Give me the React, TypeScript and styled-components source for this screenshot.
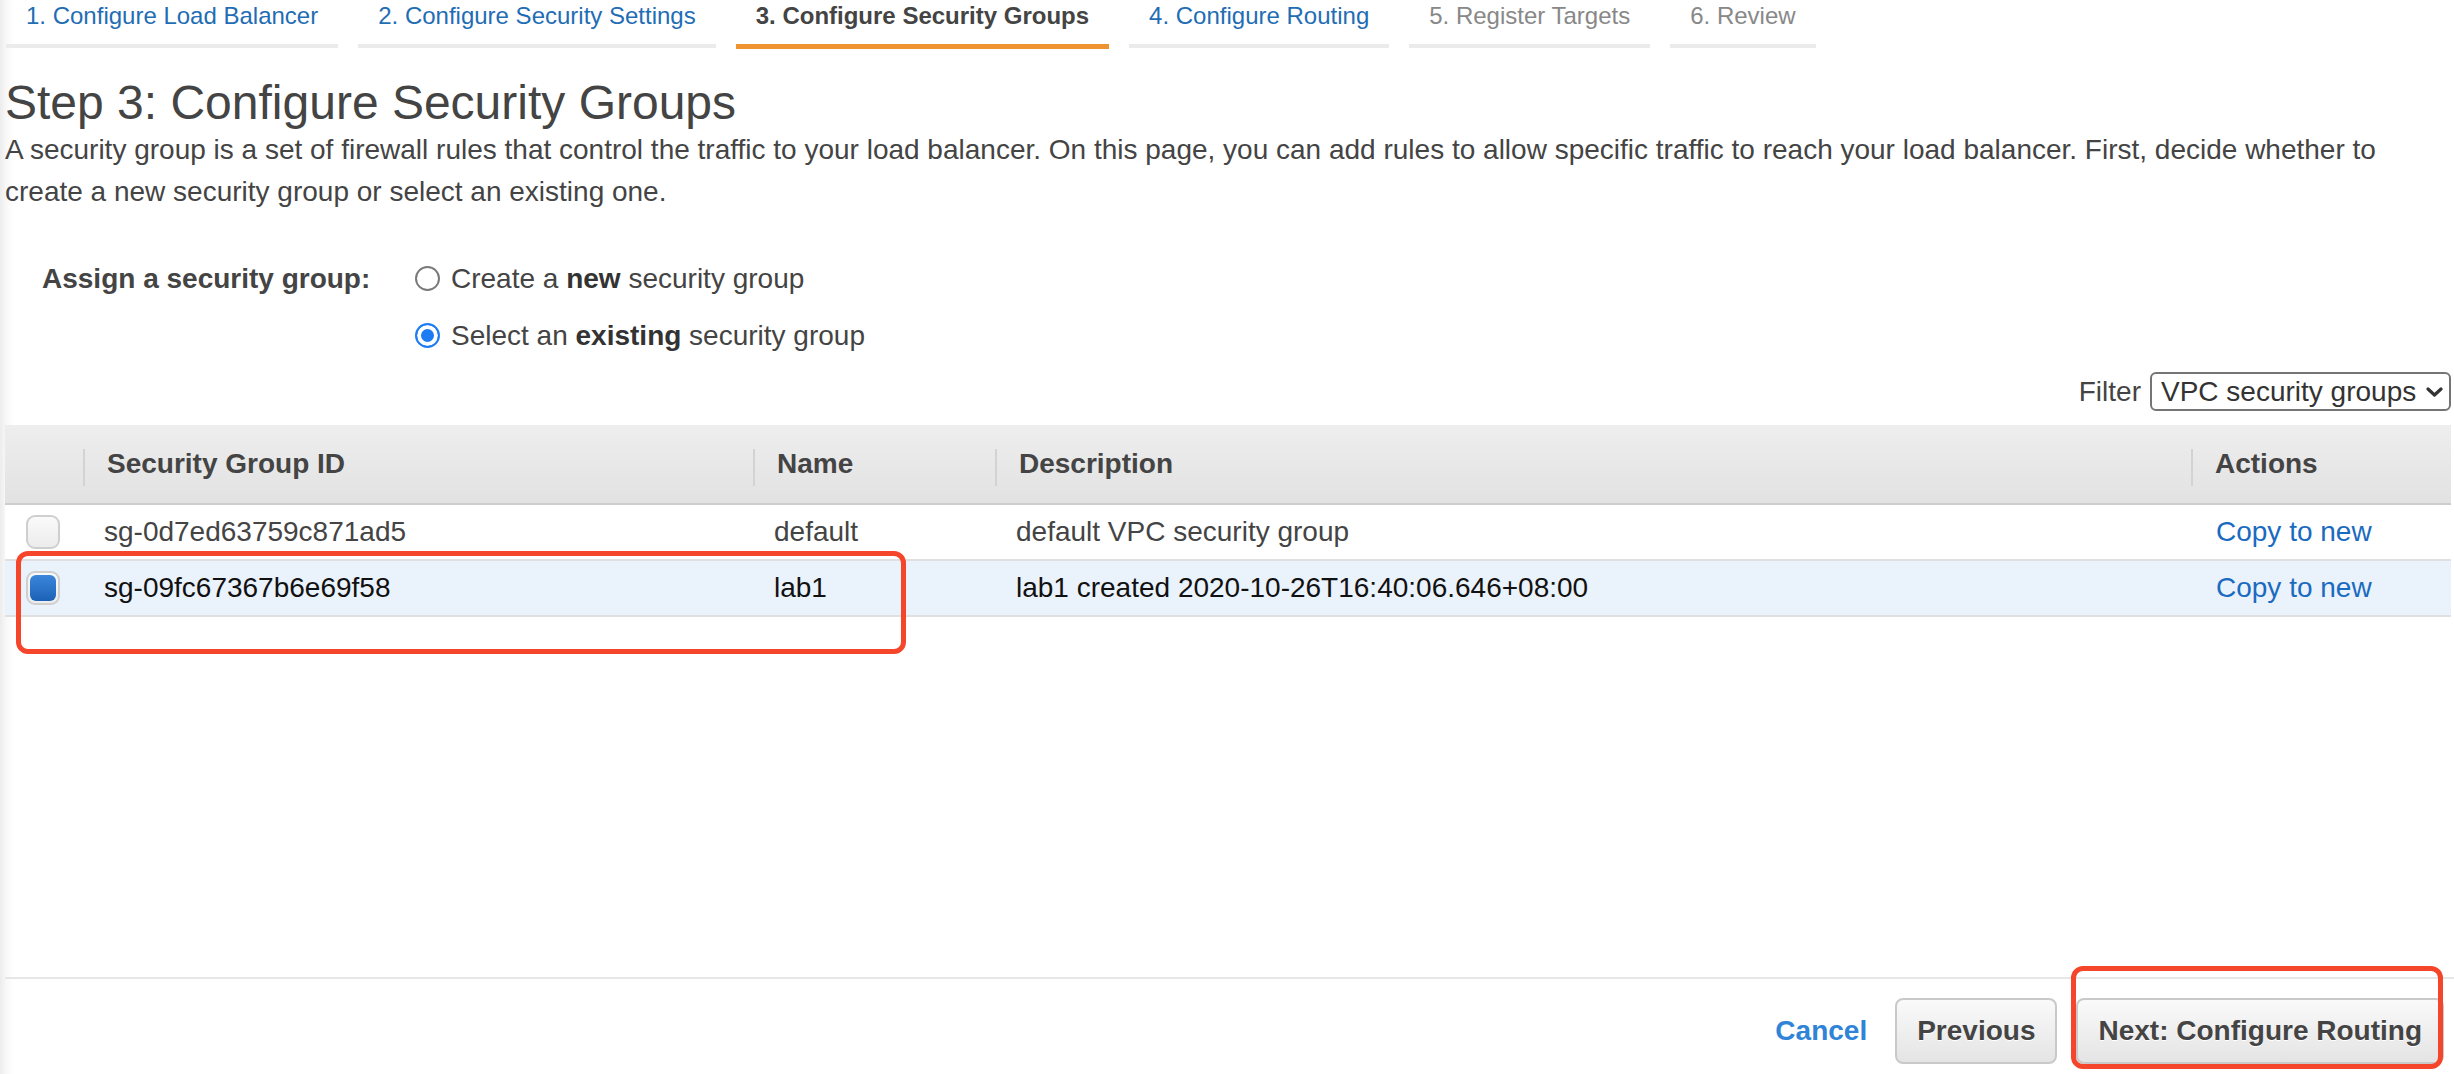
import React from "react";
import styled, { createGlobalStyle } from "styled-components";

const Global = createGlobalStyle`
  html, body { margin: 0; padding: 0; }
  body {
    background: linear-gradient(to right, #ececec 0px, #f8f8f8 6px, #ffffff 14px);
    font-family: "Liberation Sans", Arial, Helvetica, sans-serif;
    color: #444;
  }
`;

const Page = styled.div`
  position: relative;
  width: 2454px;
  height: 1074px;
  overflow: hidden;
  display: flex;
  flex-direction: column;
`;

const TabBar = styled.div`
  display: flex;
  align-items: flex-end;
  gap: 20px;
  padding-left: 6px;
`;

const Tab = styled.div<{ $state: "link" | "active" | "disabled" }>`
  padding: 0 20px 12px;
  font-size: 24px;
  line-height: 32px;
  white-space: nowrap;
  font-weight: ${(p) => (p.$state === "active" ? 700 : 400)};
  color: ${(p) =>
    p.$state === "active" ? "#444" : p.$state === "link" ? "#1f6db4" : "#888"};
  border-bottom: ${(p) =>
    p.$state === "active" ? "5px solid #ee9330" : "4px solid #ebebeb"};
  margin-bottom: ${(p) => (p.$state === "active" ? "0" : "1px")};
`;

const Content = styled.div`
  padding: 0 3px 0 5px;
  display: flex;
  flex-direction: column;
`;

const Heading = styled.h1`
  margin: 28px 0 0;
  font-size: 48px;
  line-height: 52px;
  font-weight: 400;
  color: #444;
`;

const Intro = styled.p`
  margin: 0;
  font-size: 28px;
  line-height: 42px;
  color: #444;
`;

const AssignGrid = styled.div`
  margin-top: 37px;
  display: grid;
  grid-template-columns: 373px 1fr;
  padding-left: 37px;
`;

const AssignLabel = styled.div`
  font-size: 28px;
  font-weight: 700;
  line-height: 57px;
  color: #444;
`;

const RadioList = styled.div`
  display: flex;
  flex-direction: column;
`;

const RadioRow = styled.label`
  display: flex;
  align-items: center;
  gap: 11px;
  height: 57px;
  font-size: 28px;
  color: #444;
  b { color: #333; }
`;

const RadioDot = styled.span<{ $checked?: boolean }>`
  box-sizing: border-box;
  width: 25px;
  height: 25px;
  border-radius: 50%;
  flex: none;
  border: ${(p) => (p.$checked ? "2px solid #1d7cf2" : "2px solid #7a7a7a")};
  background: ${(p) => (p.$checked ? "#1d7cf2" : "#fff")};
  box-shadow: ${(p) => (p.$checked ? "inset 0 0 0 4px #fff" : "none")};
`;

const FilterRow = styled.div`
  margin-top: 8px;
  display: flex;
  justify-content: flex-end;
  align-items: center;
  gap: 9px;
  font-size: 28px;
  color: #444;
`;

const SelectBox = styled.div`
  box-sizing: border-box;
  width: 301px;
  height: 39px;
  border: 2px solid #757575;
  border-radius: 6px;
  display: flex;
  align-items: center;
  justify-content: space-between;
  padding: 0 6px 0 9px;
  font-size: 28px;
  color: #333;
  background: #fff;
`;

const TableWrap = styled.div`
  margin-top: 14px;
  height: 552px;
  display: flex;
  flex-direction: column;
`;

const cols = "78px 670px 242px 1196px 1fr";

const HeaderRow = styled.div`
  display: grid;
  grid-template-columns: ${cols};
  height: 78px;
  background: linear-gradient(#eeeeee, #e2e2e2);
  border-bottom: 2px solid #cdcdcd;
`;

const HeadCell = styled.div<{ $sep?: boolean }>`
  display: flex;
  align-items: center;
  padding-left: 22px;
  font-size: 28px;
  font-weight: 700;
  color: #444;
  border-left: ${(p) => (p.$sep ? "2px solid #d3d3d3" : "none")};
  border-image: ${(p) =>
    p.$sep
      ? "linear-gradient(transparent 24px, #d3d3d3 24px, #d3d3d3 60px, transparent 60px) 1"
      : "none"};
`;

const Row = styled.div<{ $selected?: boolean }>`
  display: grid;
  grid-template-columns: ${cols};
  height: 54px;
  border-bottom: 2px solid #e0e0e0;
  background: ${(p) => (p.$selected ? "#eaf2fc" : "#fff")};
  color: ${(p) => (p.$selected ? "#111" : "#444")};
`;

const Cell = styled.div<{ $pad?: number }>`
  display: flex;
  align-items: center;
  padding-left: ${(p) => p.$pad ?? 21}px;
  font-size: 28px;
  white-space: nowrap;
`;

const CheckCell = styled.div`
  display: flex;
  align-items: center;
  padding-left: 21px;
`;

const Check = styled.span<{ $checked?: boolean }>`
  box-sizing: border-box;
  width: 34px;
  height: 34px;
  border-radius: 9px;
  border: 2px solid #cfcfcf;
  background: linear-gradient(#fafafa, #ececec);
  display: flex;
  align-items: center;
  justify-content: center;
  &::after {
    content: "";
    display: ${(p) => (p.$checked ? "block" : "none")};
    width: 26px;
    height: 26px;
    border-radius: 6px;
    background: linear-gradient(#3b87dc, #1b62b6);
  }
`;

const Link = styled.a`
  color: #1a6bc0;
  text-decoration: none;
  font-size: 28px;
`;

const Footer = styled.div`
  border-top: 2px solid #e6e6e6;
  padding: 19px 10px 0 0;
  display: flex;
  justify-content: flex-end;
  align-items: center;
  margin-right: -3px;
`;

const CancelLink = styled.a`
  font-size: 28px;
  font-weight: 700;
  color: #2f84d8;
  margin-right: 28px;
`;

const Button = styled.button`
  box-sizing: border-box;
  height: 66px;
  padding: 0 20px;
  margin-left: 19px;
  border: 2px solid #c9c9c9;
  border-radius: 8px;
  background: linear-gradient(#fafafa, #e4e4e4);
  font-family: "Liberation Sans", Arial, sans-serif;
  font-size: 28px;
  font-weight: 700;
  color: #444;
  text-shadow: 0 1px 0 #fff;
  &:first-of-type { margin-left: 0; }
`;

const Annotation = styled.div<{ $x: number; $y: number; $w: number; $h: number }>`
  position: absolute;
  left: ${(p) => p.$x}px;
  top: ${(p) => p.$y}px;
  width: ${(p) => p.$w}px;
  height: ${(p) => p.$h}px;
  box-sizing: border-box;
  border: 5px solid #f5452b;
  border-radius: 12px;
  pointer-events: none;
`;

const Chevron = () => (
  <svg width="17" height="12" viewBox="0 0 17 12">
    <path d="M2 3 L8.5 9 L15 3" fill="none" stroke="#333" strokeWidth="3.2" strokeLinecap="round" strokeLinejoin="round" />
  </svg>
);

const tabs: { label: string; state: "link" | "active" | "disabled" }[] = [
  { label: "1. Configure Load Balancer", state: "link" },
  { label: "2. Configure Security Settings", state: "link" },
  { label: "3. Configure Security Groups", state: "active" },
  { label: "4. Configure Routing", state: "link" },
  { label: "5. Register Targets", state: "disabled" },
  { label: "6. Review", state: "disabled" },
];

const groups = [
  { id: "sg-0d7ed63759c871ad5", name: "default", desc: "default VPC security group", selected: false },
  { id: "sg-09fc67367b6e69f58", name: "lab1", desc: "lab1 created 2020-10-26T16:40:06.646+08:00", selected: true },
];

export default function App() {
  return (
    <Page>
      <Global />
      <TabBar>
        {tabs.map((t) => (
          <Tab key={t.label} $state={t.state}>
            {t.label}
          </Tab>
        ))}
      </TabBar>
      <Content>
        <Heading>Step 3: Configure Security Groups</Heading>
        <Intro>
          A security group is a set of firewall rules that control the traffic to your load balancer. On this page, you can add rules to allow specific traffic to reach your load balancer. First, decide whether to create a new security group or select an existing one.
        </Intro>
        <AssignGrid>
          <AssignLabel>Assign a security group:</AssignLabel>
          <RadioList>
            <RadioRow>
              <RadioDot />
              <span>
                Create a <b>new</b> security group
              </span>
            </RadioRow>
            <RadioRow>
              <RadioDot $checked />
              <span>
                Select an <b>existing</b> security group
              </span>
            </RadioRow>
          </RadioList>
        </AssignGrid>
        <FilterRow>
          <span>Filter</span>
          <SelectBox>
            <span>VPC security groups</span>
            <Chevron />
          </SelectBox>
        </FilterRow>
        <TableWrap>
          <HeaderRow>
            <HeadCell />
            <HeadCell $sep>Security Group ID</HeadCell>
            <HeadCell $sep>Name</HeadCell>
            <HeadCell $sep>Description</HeadCell>
            <HeadCell $sep>Actions</HeadCell>
          </HeaderRow>
          {groups.map((g) => (
            <Row key={g.id} $selected={g.selected}>
              <CheckCell>
                <Check $checked={g.selected} />
              </CheckCell>
              <Cell>{g.id}</Cell>
              <Cell>{g.name}</Cell>
              <Cell>{g.desc}</Cell>
              <Cell $pad={25}>
                <Link href="#">Copy to new</Link>
              </Cell>
            </Row>
          ))}
        </TableWrap>
        <Footer>
          <CancelLink>Cancel</CancelLink>
          <Button>Previous</Button>
          <Button>Next: Configure Routing</Button>
        </Footer>
      </Content>
      <Annotation $x={16} $y={551} $w={890} $h={103} />
      <Annotation $x={2071} $y={966} $w={372} $h={103} />
    </Page>
  );
}
